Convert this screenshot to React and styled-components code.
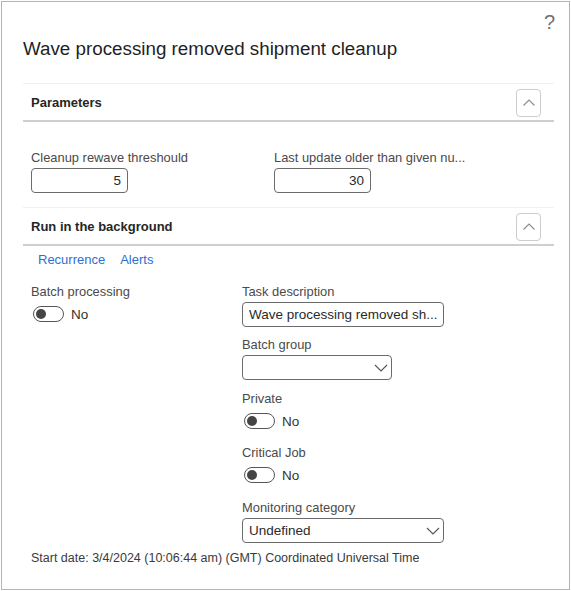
import React from "react";
import styled, { createGlobalStyle } from "styled-components";

const GlobalStyle = createGlobalStyle`
  html, body {
    margin: 0;
    padding: 0;
    background: #fff;
  }
  body {
    font-family: "Liberation Sans", Arial, sans-serif;
    color: #242424;
  }
`;

const Frame = styled.div`
  box-sizing: border-box;
  width: 569px;
  height: 589px;
  margin: 1px;
  border: 1px solid #b4b4b4;
  padding: 0 15px 0 21px;
  position: relative;
`;

const Help = styled.span`
  position: absolute;
  top: 9px;
  right: 14px;
  font-size: 20px;
  color: #707070;
`;

const Title = styled.h1`
  box-sizing: border-box;
  margin: 0;
  padding-top: 34px;
  font-size: 18.8px;
  font-weight: 400;
  color: #1f1f1f;
  line-height: 26px;
  height: 82px;
  border-bottom: 1px solid #f0f0f0;
`;

const SectionHead = styled.div`
  box-sizing: border-box;
  display: flex;
  align-items: center;
  justify-content: space-between;
  height: ${p => p.h || 38}px;
  padding: 1px 13px 0 8px;
  border-bottom: 2px solid #cfcfcf;
`;

const SectionTitle = styled.span`
  font-size: 13px;
  font-weight: 700;
  color: #262626;
`;

const Collapse = styled.button`
  box-sizing: border-box;
  width: 25px;
  height: 28px;
  border: 1px solid #cdcdcd;
  border-radius: 4px;
  background: #fff;
  padding: 0;
  display: flex;
  align-items: center;
  justify-content: center;
`;

const Section = styled.div`
  padding: ${p => p.pad || "0 0 0 8px"};
`;

const Row = styled.div`
  display: flex;
`;

const Column = styled.div`
  display: flex;
  flex-direction: column;
  width: ${p => p.w}px;
`;

const Field = styled.div`
  display: flex;
  flex-direction: column;
  margin-bottom: ${p => p.mb || 0}px;
`;

const Label = styled.label`
  font-size: 12.9px;
  color: #4a4a4a;
  line-height: 16px;
  height: 16px;
  margin-bottom: 2px;
  white-space: nowrap;
`;

const Input = styled.div`
  box-sizing: border-box;
  width: ${p => p.w}px;
  height: 25px;
  border: 1px solid #6b6b6b;
  border-radius: 4px;
  display: flex;
  align-items: center;
  justify-content: ${p => (p.right ? "flex-end" : "space-between")};
  padding: 0 ${p => (p.right ? 6 : 3)}px 0 6px;
  font-size: 13.5px;
  color: #2a2a2a;
  white-space: nowrap;
  overflow: hidden;
`;

const Divider = styled.div`
  height: 1px;
  background: #f0f0f0;
  margin-top: 14px;
`;

const Tabs = styled.div`
  box-sizing: border-box;
  display: flex;
  gap: 15px;
  padding: 5px 0 0 15px;
  height: 22px;
`;

const Tab = styled.a`
  font-size: 13px;
  color: #2f6ecf;
  line-height: 17px;
`;

const ToggleRow = styled.div`
  display: flex;
  align-items: center;
  gap: 7px;
  height: 24px;
  padding-left: 2px;
  font-size: 13.5px;
  color: #333;
`;

const Track = styled.span`
  box-sizing: border-box;
  width: 31px;
  height: 16px;
  border: 1px solid #555;
  border-radius: 8px;
  display: flex;
  align-items: center;
  padding-left: 2px;
`;

const Knob = styled.span`
  width: 10px;
  height: 10px;
  border-radius: 50%;
  background: #454545;
`;

const Footer = styled.div`
  font-size: 12.5px;
  line-height: 15px;
  color: #3a3a3a;
  padding: 8px 0 0 8px;
`;

const Chevron = ({ up }) =>
  up ? (
    <svg width="12" height="7" viewBox="0 0 12 7" fill="none">
      <path d="M0.5 6.5 L6 1 L11.5 6.5" stroke="#8a8a8a" strokeWidth="1.1" />
    </svg>
  ) : (
    <svg width="14" height="8" viewBox="0 0 14 8" fill="none">
      <path d="M1 1 L7 7 L13 1" stroke="#555" strokeWidth="1.1" />
    </svg>
  );

const Toggle = () => (
  <ToggleRow>
    <Track>
      <Knob />
    </Track>
    No
  </ToggleRow>
);

export default function App() {
  return (
    <>
      <GlobalStyle />
      <Frame>
        <Help>?</Help>
        <Title>Wave processing removed shipment cleanup</Title>
        <SectionHead h={38}>
          <SectionTitle>Parameters</SectionTitle>
          <Collapse>
            <Chevron up />
          </Collapse>
        </SectionHead>
        <Section pad="28px 0 0 8px">
          <Row>
            <Column w={243}>
              <Field>
                <Label>Cleanup rewave threshould</Label>
                <Input w={97} right>5</Input>
              </Field>
            </Column>
            <Column w={200}>
              <Field>
                <Label>Last update older than given nu...</Label>
                <Input w={97} right>30</Input>
              </Field>
            </Column>
          </Row>
        </Section>
        <Divider />
        <SectionHead h={38}>
          <SectionTitle>Run in the background</SectionTitle>
          <Collapse>
            <Chevron up />
          </Collapse>
        </SectionHead>
        <Tabs>
          <Tab>Recurrence</Tab>
          <Tab>Alerts</Tab>
        </Tabs>
        <Section pad="16px 0 0 8px">
          <Row>
            <Column w={211}>
              <Field>
                <Label>Batch processing</Label>
                <Toggle />
              </Field>
            </Column>
            <Column w={210}>
              <Field mb={10}>
                <Label>Task description</Label>
                <Input w={202}>Wave processing removed sh...</Input>
              </Field>
              <Field mb={11}>
                <Label>Batch group</Label>
                <Input w={150}>
                  <span />
                  <Chevron />
                </Input>
              </Field>
              <Field mb={12}>
                <Label>Private</Label>
                <Toggle />
              </Field>
              <Field mb={13}>
                <Label>Critical Job</Label>
                <Toggle />
              </Field>
              <Field>
                <Label>Monitoring category</Label>
                <Input w={202}>
                  Undefined
                  <Chevron />
                </Input>
              </Field>
            </Column>
          </Row>
        </Section>
        <Footer>Start date: 3/4/2024 (10:06:44 am) (GMT) Coordinated Universal Time</Footer>
      </Frame>
    </>
  );
}
